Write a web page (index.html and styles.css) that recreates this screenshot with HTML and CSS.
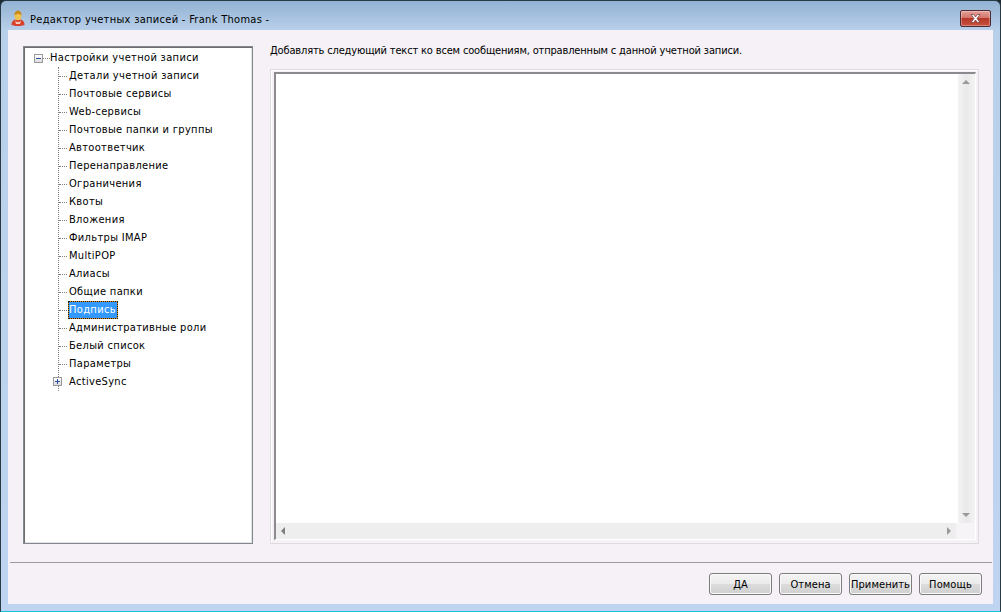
FILE: index.html
```html
<!DOCTYPE html>
<html lang="ru">
<head>
<meta charset="utf-8">
<title>Редактор учетных записей</title>
<link rel="stylesheet" href="styles.css">
</head>
<body>
<div class="window">
  <header class="titlebar">
    <svg class="appicon" width="14" height="16" viewBox="0 0 14 16">
      <path d="M0.500 15c0-3.500 1.500-5.500 6.500-5.500s6.500 2 6.500 5.500c-4 1.500-9 1.500-13 0z" fill="#d8402c"/>
      <path d="M4 10.500c1.500 2 4.500 2 6 0l-1 3.500H5z" fill="#f3c9bd"/>
      <ellipse cx="7" cy="6" rx="3.400" ry="4.300" fill="#f1c250"/>
      <path d="M3.300 5.500C3.300 2.500 5 .5 7 .5s3.700 2 3.700 5c-2-2-5.400-2-7.400 0z" fill="#c98a17"/>
    </svg>
    <span class="title">Редактор учетных записей - Frank Thomas -</span>
    <button class="close" type="button" aria-label="Закрыть">
      <svg width="13" height="11" viewBox="0 0 13 11"><path d="M2 1.500h2.500L6.500 4l2-2.500H11L8 5.500l3 4H8.500l-2-2.500-2 2.500H2l3-4z" fill="#fff" stroke="#6b3a3a" stroke-width=".7"/></svg>
    </button>
  </header>
  <div class="client">
    <div class="main">
      <nav class="tree">
        <div class="root"><span class="exp"><i class="minus"></i></span><span class="conn"></span><span class="label">Настройки учетной записи</span></div>
        <ul class="kids">
          <li><span class="label">Детали учетной записи</span></li>
          <li><span class="label">Почтовые сервисы</span></li>
          <li><span class="label">Web-сервисы</span></li>
          <li><span class="label">Почтовые папки и группы</span></li>
          <li><span class="label">Автоответчик</span></li>
          <li><span class="label">Перенаправление</span></li>
          <li><span class="label">Ограничения</span></li>
          <li><span class="label">Квоты</span></li>
          <li><span class="label">Вложения</span></li>
          <li><span class="label">Фильтры IMAP</span></li>
          <li><span class="label">MultiPOP</span></li>
          <li><span class="label">Алиасы</span></li>
          <li><span class="label">Общие папки</span></li>
          <li class="sel"><span class="label">Подпись</span></li>
          <li><span class="label">Административные роли</span></li>
          <li><span class="label">Белый список</span></li>
          <li><span class="label">Параметры</span></li>
          <li class="last"><span class="exp small"><i class="minus"></i><i class="vert"></i></span><span class="label">ActiveSync</span></li>
        </ul>
      </nav>
      <section class="panel">
        <p class="caption">Добавлять следующий текст ко всем сообщениям, отправленным с данной учетной записи.</p>
        <div class="group">
          <div class="editor">
            <div class="upper">
              <div class="area"></div>
              <div class="vbar"><span class="arr up"></span><span class="arr down"></span></div>
            </div>
            <div class="lower">
              <div class="hbar"><span class="arr left"></span><span class="arr right"></span></div>
              <div class="corner"></div>
            </div>
          </div>
        </div>
      </section>
    </div>
    <footer class="footer">
      <button class="btn" type="button">ДА</button>
      <button class="btn" type="button">Отмена</button>
      <button class="btn" type="button">Применить</button>
      <button class="btn" type="button">Помощь</button>
    </footer>
  </div>
</div>
</body>
</html>
```
FILE: styles.css
```css
* { box-sizing: border-box; }
html, body { margin: 0; padding: 0; }
body { width: 1001px; height: 612px; overflow: hidden; background: #1c2a33; font: 11px "DejaVu Sans Condensed", "DejaVu Sans", sans-serif; font-stretch: condensed; color: #000; }
.window { width: 1001px; height: 612px; display: flex; flex-direction: column; border: 1px solid #2a3a44; border-bottom-color: #19c0d8; border-radius: 6px 6px 0 0; background: linear-gradient(#93b2d3 0, #b9d0ea 30px, #bed4f0 100%); padding: 0 7px 7px; }
.titlebar { height: 29px; flex: none; display: flex; align-items: center; padding-left: 3px; }
.appicon { margin-top: 5px; flex: none; }
.title { margin-left: 5px; margin-top: 7px; font-size: 11px; color: #000; letter-spacing: .3px; }
.close { margin: 5px 2px 0 auto; width: 31px; height: 17px; padding: 0; display: flex; align-items: center; justify-content: center; border: 1px solid #4f2a33; border-radius: 2px; background: linear-gradient(#e2a097 0, #d3766c 45%, #b7382a 50%, #c8523f 100%); box-shadow: inset 0 0 0 1px rgba(255,255,255,.3); }
.client { flex: 1; display: flex; flex-direction: column; background: #f5f1f6; min-height: 0; padding: 16px 14px 0 15px; }
.main { display: flex; gap: 17px; height: 498px; flex: none; }
.tree { width: 230px; height: 498px; flex: none; border: 1px solid #828790; box-shadow: inset 1px 1px 0 #6d6d6d, inset -1px -1px 0 #e3e3e3; background: #fff; padding: 2px 0 0 2px; letter-spacing: .33px; }
.root, .kids li { height: 18px; display: flex; align-items: center; position: relative; white-space: nowrap; }
.root { padding-left: 8px; }
.exp { width: 9px; height: 9px; border: 1px solid #9b9b9b; background: linear-gradient(#fff, #dcdcdc); position: relative; flex: none; display: block; }
.minus { position: absolute; left: 1px; top: 3px; width: 5px; height: 1px; background: #2c4ea0; }
.vert { position: absolute; left: 3px; top: 1px; width: 1px; height: 5px; background: #2c4ea0; }
.conn { width: 7px; border-top: 1px dotted #808080; flex: none; }
.label { padding: 0 1px; line-height: 18px; height: 18px; }
.root .label { margin-left: -1px; }
.kids { list-style: none; margin: 0 0 0 32px; padding: 0; border-left: 1px dotted #808080; height: 324px; }
.kids li { padding-left: 9px; }
.kids li::before { content: ""; position: absolute; left: 0; top: 9px; width: 8px; border-top: 1px dotted #808080; }
.kids li.last::before { display: none; }
.kids li.last .exp { position: absolute; left: -6px; top: 4px; }
.sel .label { background: #3399ff; color: #fff; padding: 0 2px 0 1px; box-shadow: inset 0 0 0 1px #e08a20; outline: 1px dotted #1a1a1a; outline-offset: -1px; }
.panel { flex: 1; display: flex; flex-direction: column; min-width: 0; }
.caption { margin: -2px 0 0; height: 25px; line-height: 13px; font-size: 11px; letter-spacing: -.16px; white-space: nowrap; }
.group { flex: 1; border: 1px solid #dedbdf; background: #f5f1f6; box-shadow: inset 1px 1px 0 #fff; padding: 2px 2px 3px 3px; }
.editor { height: 100%; display: flex; flex-direction: column; border-top: 2px solid #8a8a8f; border-left: 2px solid #8a8a8f; border-right: 1px solid #fff; border-bottom: 1px solid #fff; background: #fff; }
.upper { flex: 1; display: flex; min-height: 0; }
.area { flex: 1; background: #fff; }
.vbar { width: 17px; background: linear-gradient(90deg, #f3f3f3, #e9e9e9 50%, #f3f3f3); position: relative; }
.lower { height: 16px; flex: none; display: flex; }
.hbar { flex: 1; background: #eeeeee; position: relative; }
.corner { width: 19px; background: #f6f4f6; }
.arr { position: absolute; width: 0; height: 0; border: 4px solid transparent; }
.up { top: 6px; left: 4px; border-top: 0; border-bottom-color: #9a9a9a; }
.down { bottom: 6px; left: 4px; border-bottom: 0; border-top-color: #9a9a9a; }
.left { left: 5px; top: 4px; border-left: 0; border-right-color: #7e7e7e; }
.right { right: 5px; top: 4px; border-right: 0; border-left-color: #9a9a9a; }
.footer { margin: 18px -13px 0 -13px; height: 42px; flex: none; border-top: 1px solid #9d9a9e; display: flex; justify-content: flex-end; gap: 7px; padding-top: 10px; padding-right: 10px; }
.btn { width: 63px; height: 22px; padding: 0; font: 11px "DejaVu Sans Condensed", "DejaVu Sans", sans-serif; font-stretch: condensed; color: #000; border: 1px solid #7c7c7c; border-radius: 3px; background: linear-gradient(#f4f4f4 0, #ebebeb 48%, #dcdcdc 52%, #cfcfcf 100%); box-shadow: inset 0 0 0 1px #fafafa; letter-spacing: .1px; }
```
